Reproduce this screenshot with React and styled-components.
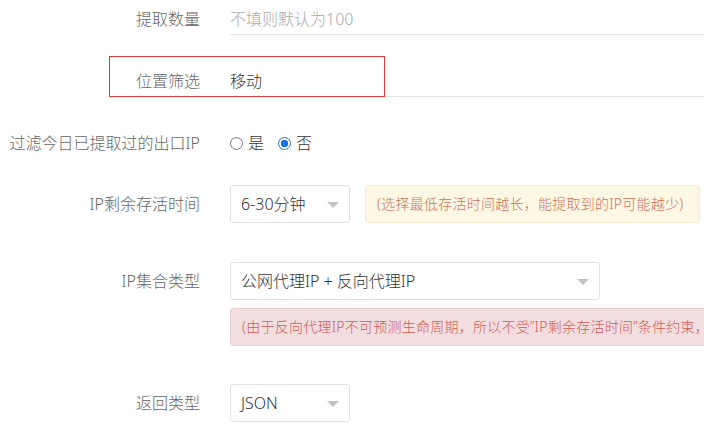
import styled, { createGlobalStyle } from "styled-components";

const GlobalStyle = createGlobalStyle`
  html, body {
    margin: 0;
    padding: 0;
    background: #fff;
    overflow: hidden;
  }
  body {
    font-family: "Noto Sans", "Noto Sans CJK SC", "Microsoft YaHei", sans-serif;
    font-weight: 300;
    color: #333;
  }
`;

export default function App() {
  return (
    <>
      <GlobalStyle />
      <Form>
        <Row $mt={0}>
          <Label>提取数量</Label>
          <LineInput>
            <Placeholder>不填则默认为100</Placeholder>
          </LineInput>
        </Row>

        <Row $mt={27}>
          <Label>位置筛选</Label>
          <LineInput>移动</LineInput>
          <Highlight />
        </Row>

        <Row $mt={36}>
          <Label $tight>过滤今日已提取过的出口IP</Label>
          <RadioGroup>
            <RadioItem>
              <RadioDot />是
            </RadioItem>
            <RadioItem>
              <RadioDot $checked />否
            </RadioItem>
          </RadioGroup>
        </Row>

        <Row $mt={32}>
          <Label>IP剩余存活时间</Label>
          <Inline>
            <Select $width={120}>
              6-30分钟
              <Caret />
            </Select>
            <Alert $tone="warning">(选择最低存活时间越长，能提取到的IP可能越少)</Alert>
          </Inline>
        </Row>

        <Row $mt={39}>
          <Label>IP集合类型</Label>
          <Stack>
            <Select $width={370}>
              公网代理IP + 反向代理IP
              <Caret />
            </Select>
            <Alert $tone="danger" $wide>
              (由于反向代理IP不可预测生命周期，所以不受”IP剩余存活时间”条件约束，按需选择)
            </Alert>
          </Stack>
        </Row>

        <Row $mt={38}>
          <Label>返回类型</Label>
          <Select $width={120}>
            JSON
            <Caret />
          </Select>
        </Row>
      </Form>
    </>
  );
}

const Form = styled.div`
  width: 704px;
  height: 436px;
  overflow: hidden;
`;

const Row = styled.div`
  position: relative;
  display: grid;
  grid-template-columns: 200px 1fr;
  column-gap: 30px;
  align-items: start;
  margin-top: ${(p) => p.$mt}px;
`;

const Label = styled.div`
  text-align: right;
  font-size: 16px;
  color: #666;
  white-space: nowrap;
  line-height: 20px;
  padding-top: ${(p) => (p.$tight ? 0 : 9)}px;
`;

const LineInput = styled.div`
  height: 35px;
  box-sizing: border-box;
  padding-top: 5px;
  line-height: 28px;
  font-size: 16px;
  color: #333;
  border-bottom: 1px solid #e3e3e3;
`;

const Placeholder = styled.span`
  color: #aaa;
`;

const Highlight = styled.div`
  position: absolute;
  left: 109px;
  top: -6px;
  width: 276px;
  height: 41px;
  box-sizing: border-box;
  border: 1px solid #e53935;
`;

const RadioGroup = styled.div`
  display: flex;
  align-items: center;
  gap: 14px;
  height: 20px;
`;

const RadioItem = styled.label`
  display: flex;
  align-items: center;
  gap: 5px;
  font-size: 16px;
  color: #333;
  line-height: 20px;
`;

const RadioDot = styled.span`
  width: 13px;
  height: 13px;
  box-sizing: border-box;
  border-radius: 50%;
  border: 1px solid ${(p) => (p.$checked ? "#1a73e8" : "#777")};
  background: ${(p) =>
    p.$checked
      ? "radial-gradient(circle, #1a73e8 0 3.5px, #fff 4px)"
      : "#fff"};
`;

const Inline = styled.div`
  display: flex;
  align-items: flex-start;
  gap: 15px;
`;

const Stack = styled.div`
  display: flex;
  flex-direction: column;
  gap: 8px;
`;

const Select = styled.div`
  position: relative;
  width: ${(p) => p.$width}px;
  height: 38px;
  box-sizing: border-box;
  border: 1px solid #e2e2e2;
  border-radius: 3px;
  padding-left: 10px;
  line-height: 36px;
  font-size: 16px;
  color: #333;
  background: #fff;
`;

const Caret = styled.span`
  position: absolute;
  right: 10px;
  top: 16px;
  width: 0;
  height: 0;
  border-left: 6px solid transparent;
  border-right: 6px solid transparent;
  border-top: 6px solid #c4c4c4;
`;

const Alert = styled.div`
  box-sizing: border-box;
  height: 38px;
  padding: 0 16px 0 11px;
  line-height: 36px;
  font-size: 14px;
  letter-spacing: 0.25px;
  white-space: nowrap;
  border-radius: 4px;
  width: ${(p) => (p.$wide ? "520px" : "auto")};
  color: ${(p) => (p.$tone === "danger" ? "#d05a5a" : "#d0715c")};
  background: ${(p) => (p.$tone === "danger" ? "#f2dede" : "#fcf8e3")};
  border: 1px solid ${(p) => (p.$tone === "danger" ? "#ebccd1" : "#faebcc")};
`;
